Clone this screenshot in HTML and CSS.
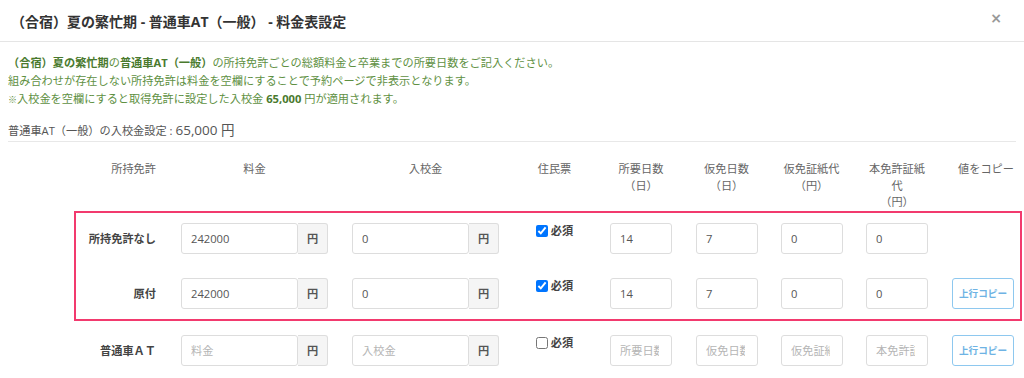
FILE: index.html
```html
<!DOCTYPE html>
<html lang="ja">

<head>
  <meta charset="UTF-8">
  <meta name="viewport" content="width=device-width, initial-scale=1.0">
  <title>料金表設定</title>
  <link rel="stylesheet" href="styles.css">
</head>

<body>
  <div class="modal">
    <div class="modal-header">
      <h4 class="modal-title">（合宿）夏の繁忙期 - 普通車AT（一般） - 料金表設定</h4>
      <button class="close" type="button">×</button>
    </div>

    <div class="modal-body">
      <p class="note">
        <b>（合宿）夏の繁忙期</b>の<b>普通車AT（一般）</b>の所持免許ごとの総額料金と卒業までの所要日数をご記入ください。<br>
        組み合わせが存在しない所持免許は料金を空欄にすることで予約ページで非表示となります。<br>
        <span class="mark">※</span>入校金を空欄にすると取得免許に設定した入校金 <b>65,000</b> 円が適用されます。
      </p>

      <p class="entry-fee">普通車AT（一般）の入校金設定 : <span class="amount">65,000 円</span></p>

      <div class="fee-table">
        <div class="fee-row fee-head">
          <div class="cell label">所持免許</div>
          <div class="cell">料金</div>
          <div class="cell">入校金</div>
          <div class="cell">住民票</div>
          <div class="cell">所要日数<br>（日）</div>
          <div class="cell">仮免日数<br>（日）</div>
          <div class="cell">仮免証紙代<br>（円）</div>
          <div class="cell">本免許証紙代<br>（円）</div>
          <div class="cell copy">値をコピー</div>
        </div>

        <div class="fee-group">
          <div class="fee-row">
            <div class="cell label">所持免許なし</div>
            <div class="cell">
              <div class="input-group"><input type="text" value="242000"><span class="addon">円</span></div>
            </div>
            <div class="cell">
              <div class="input-group"><input type="text" value="0"><span class="addon">円</span></div>
            </div>
            <div class="cell check"><label><input type="checkbox" checked>必須</label></div>
            <div class="cell"><input class="small" type="text" value="14"></div>
            <div class="cell"><input class="small" type="text" value="7"></div>
            <div class="cell"><input class="small" type="text" value="0"></div>
            <div class="cell"><input class="small" type="text" value="0"></div>
            <div class="cell copy"></div>
          </div>

          <div class="fee-row">
            <div class="cell label">原付</div>
            <div class="cell">
              <div class="input-group"><input type="text" value="242000"><span class="addon">円</span></div>
            </div>
            <div class="cell">
              <div class="input-group"><input type="text" value="0"><span class="addon">円</span></div>
            </div>
            <div class="cell check"><label><input type="checkbox" checked>必須</label></div>
            <div class="cell"><input class="small" type="text" value="14"></div>
            <div class="cell"><input class="small" type="text" value="7"></div>
            <div class="cell"><input class="small" type="text" value="0"></div>
            <div class="cell"><input class="small" type="text" value="0"></div>
            <div class="cell copy"><button class="btn-copy" type="button">上行コピー</button></div>
          </div>
        </div>

        <div class="fee-row fee-last">
          <div class="cell label">普通車ＡＴ</div>
          <div class="cell">
            <div class="input-group"><input type="text" placeholder="料金"><span class="addon">円</span></div>
          </div>
          <div class="cell">
            <div class="input-group"><input type="text" placeholder="入校金"><span class="addon">円</span></div>
          </div>
          <div class="cell check"><label><input type="checkbox">必須</label></div>
          <div class="cell"><input class="small" type="text" placeholder="所要日数"></div>
          <div class="cell"><input class="small" type="text" placeholder="仮免日数"></div>
          <div class="cell"><input class="small" type="text" placeholder="仮免証紙代"></div>
          <div class="cell"><input class="small" type="text" placeholder="本免許証紙代"></div>
          <div class="cell copy"><button class="btn-copy" type="button">上行コピー</button></div>
        </div>
      </div>
    </div>
  </div>
</body>

</html>
```

FILE: styles.css
```css
body {
  font-family: "Open Sans", "Noto Sans CJK JP", sans-serif;
  font-size: 11.2px;
  color: #555;
  margin: 0;
  padding: 0;
  background-color: #fff;
}

.modal-header {
  display: flex;
  align-items: center;
  justify-content: space-between;
  height: 41px;
  padding: 0 22px 0 11px;
  border-bottom: 1px solid #e5e5e5;
}

.modal-title {
  margin: 0;
  font-size: 14px;
  font-weight: bold;
  color: #333;
}

.close {
  border: none;
  background: none;
  padding: 0;
  margin-top: -6px;
  font-size: 14px;
  font-weight: bold;
  color: #999;
  font-family: "DejaVu Sans", sans-serif;
}

.modal-body {
  padding: 12px 8px 0;
}

.note {
  margin: 0;
  line-height: 18px;
  color: #5e9042;
}

.note b {
  color: #4a7a2e;
}

.note .mark {
  font-size: 9px;
}

.entry-fee {
  margin: 12px 0 0;
  line-height: 18px;
  padding-bottom: 1px;
  border-bottom: 1px solid #e8e8e8;
}

.entry-fee .amount {
  font-size: 13.5px;
}

.fee-table {
  margin-left: 68px;
  width: 944px;
}

.fee-row {
  display: grid;
  grid-template-columns: 93px 171px 171px 87px 86px 85px 85px 86px 80px;
  align-items: center;
}

.cell {
  padding: 0 12px;
}

.cell.label {
  padding: 0 13px 0 0;
  text-align: right;
  font-weight: bold;
  color: #444;
}

.cell.copy {
  padding: 0 0 0 12px;
}

.fee-head {
  align-items: start;
  padding-top: 19px;
  line-height: 16.5px;
  color: #666;
  text-align: center;
}

.fee-head .cell.label {
  font-weight: normal;
  color: #666;
}

.fee-group {
  margin-top: 2px;
  outline: 2px solid #f23a6e;
  padding: 10px 0;
  display: flex;
  flex-direction: column;
  gap: 24px;
}

.fee-last {
  margin-top: 16px;
}

.input-group {
  display: flex;
  height: 31px;
}

.input-group input {
  flex: 1;
  min-width: 0;
  border-radius: 3px 0 0 3px;
}

input[type="text"] {
  box-sizing: border-box;
  height: 31px;
  border: 1px solid #ddd;
  border-radius: 3px;
  padding: 0 12px 0 9px;
  font-family: inherit;
  font-size: 11.2px;
  color: #555;
  outline: none;
}

input::placeholder {
  color: #b5b5b5;
}

input.small {
  width: 62px;
  display: block;
}

.addon {
  width: 30px;
  box-sizing: border-box;
  display: flex;
  align-items: center;
  justify-content: center;
  background-color: #f5f5f5;
  border: 1px solid #ddd;
  border-left: none;
  border-radius: 0 3px 3px 0;
  font-weight: bold;
  color: #555;
}

.cell.check {
  align-self: start;
  display: flex;
  justify-content: center;
  line-height: 16px;
}

.check label {
  display: flex;
  align-items: center;
  font-weight: bold;
  color: #444;
}

.check input {
  width: 12px;
  height: 12px;
  margin: 0 3px 0 0;
}

.btn-copy {
  width: 62px;
  height: 31px;
  border: 1px solid #8ec8ef;
  border-radius: 3px;
  background-color: #fff;
  color: #6eb3e4;
  font-family: inherit;
  font-size: 9.6px;
  font-weight: bold;
  padding: 0;
}
```
